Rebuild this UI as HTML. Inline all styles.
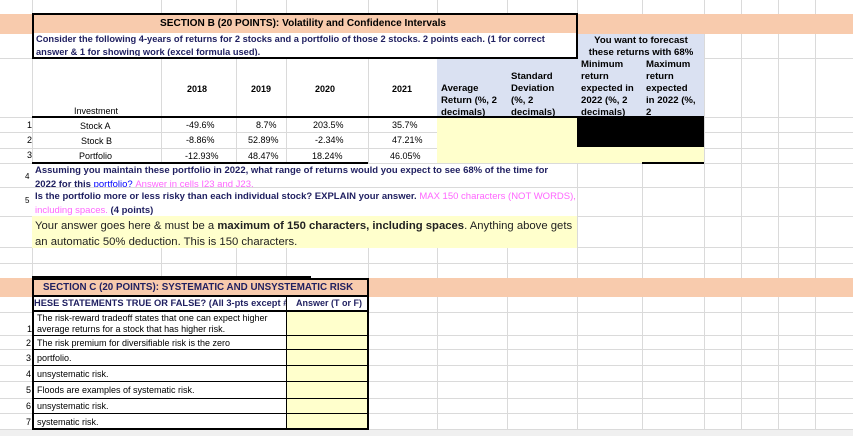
<!DOCTYPE html>
<html><head><meta charset="utf-8"><style>
body{margin:0;width:853px;height:436px;overflow:hidden;background:#fff;font-family:"Liberation Sans",sans-serif;position:relative}
.a{position:absolute;box-sizing:border-box}
.vl{position:absolute;top:0;width:1px;height:436px;background:#dadada}
.hl{position:absolute;left:0;height:1px;width:853px;background:#dadada}
.t{position:absolute;white-space:nowrap;font-size:9px;color:#000}
.b{font-weight:bold}
.bh{font-weight:bold;font-size:9.6px;line-height:12px}
</style></head><body>
<div class="vl" style="left:32px"></div><div class="vl" style="left:161px"></div><div class="vl" style="left:236px"></div><div class="vl" style="left:286px"></div><div class="vl" style="left:368px"></div><div class="vl" style="left:437px"></div><div class="vl" style="left:507px"></div><div class="vl" style="left:577px"></div><div class="vl" style="left:642px"></div><div class="vl" style="left:704px"></div><div class="vl" style="left:741px"></div><div class="vl" style="left:778px"></div><div class="vl" style="left:815px"></div>
<div class="hl" style="top:58px"></div><div class="hl" style="top:117px"></div><div class="hl" style="top:132px"></div><div class="hl" style="top:148px"></div><div class="hl" style="top:163px"></div><div class="hl" style="top:187px"></div><div class="hl" style="top:216px"></div><div class="hl" style="top:247px"></div><div class="hl" style="top:263px"></div>
<div class="hl" style="top:312px"></div><div class="hl" style="top:335px"></div><div class="hl" style="top:349px"></div><div class="hl" style="top:365px"></div><div class="hl" style="top:381px"></div><div class="hl" style="top:398px"></div><div class="hl" style="top:413px"></div><div class="hl" style="top:429px"></div>
<div class="a" style="left:0;top:14px;width:853px;height:20px;background:#f8cbad"></div>
<div class="a" style="left:0;top:278px;width:853px;height:19px;background:#f8cbad"></div>
<div class="a" style="left:32px;top:13px;width:546px;height:22px;border:2px solid #000;background:#f8cbad"></div>
<div class="t b" style="left:160px;top:17px;font-size:10.5px;transform:scaleX(0.96);transform-origin:left">SECTION B (20 POINTS): Volatility and Confidence Intervals</div>
<div class="a" style="left:32px;top:33px;width:546px;height:26px;border:2px solid #000;border-top:0;background:#fff;overflow:hidden"></div>
<div class="t b" style="left:36px;top:34px;font-size:9.3px;color:#1f1f60">Consider the following 4-years of returns for 2 stocks and a portfolio of those 2 stocks. 2 points each. (1 for correct</div>
<div class="t b" style="left:36px;top:47px;font-size:9.3px;color:#1f1f60;height:9px;overflow:hidden">answer &amp; 1 for showing work (excel formula used).</div>
<div class="a" style="left:578px;top:34px;width:126px;height:83px;background:#dae1f2"></div>
<div class="a" style="left:437px;top:59px;width:141px;height:58px;background:#dae1f2"></div>
<div class="t bh" style="left:580px;top:35px;text-align:center;width:122px">You want to forecast<br>these returns with 68%</div>
<div class="t bh" style="left:581px;top:59px">Minimum<br>return<br>expected in<br>2022 (%, 2<br>decimals)</div>
<div class="t bh" style="left:646px;top:59px">Maximum<br>return<br>expected<br>in 2022 (%,<br>2</div>
<div class="t bh" style="left:441px;top:83px">Average<br>Return (%, 2<br>decimals)</div>
<div class="t bh" style="left:511px;top:71px">Standard<br>Deviation<br>(%, 2<br>decimals)</div>
<div class="t b" style="left:187px;top:84px;font-size:9px">2018</div><div class="t b" style="left:251px;top:84px;font-size:9px">2019</div><div class="t b" style="left:315px;top:84px;font-size:9px">2020</div><div class="t b" style="left:392px;top:84px;font-size:9px">2021</div>
<div class="t" style="left:74px;top:106px">Investment</div>
<div class="a" style="left:32px;top:116px;width:672px;height:2px;background:#000"></div>
<div class="a" style="left:437px;top:118px;width:140px;height:45px;background:#ffffcc"></div>
<div class="a" style="left:577px;top:118px;width:127px;height:29px;background:#000"></div>
<div class="a" style="left:577px;top:147px;width:127px;height:16px;background:#ffffcc"></div>
<div class="t" style="left:27px;top:120px">1</div><div class="t" style="left:27px;top:135px">2</div><div class="t" style="left:27px;top:150px">3</div>
<div class="t" style="left:80px;top:121px">Stock A</div><div class="t" style="left:81px;top:136px">Stock B</div><div class="t" style="left:79px;top:151px">Portfolio</div>
<div class="t" style="left:186px;top:120px">-49.6%</div><div class="t" style="left:256px;top:120px">8.7%</div><div class="t" style="left:313px;top:120px">203.5%</div><div class="t" style="left:392px;top:120px">35.7%</div>
<div class="t" style="left:186px;top:135px">-8.86%</div><div class="t" style="left:248px;top:135px">52.89%</div><div class="t" style="left:315px;top:135px">-2.34%</div><div class="t" style="left:392px;top:135px">47.21%</div>
<div class="t" style="left:185px;top:151px">-12.93%</div><div class="t" style="left:248px;top:151px">48.47%</div><div class="t" style="left:312px;top:151px">18.24%</div><div class="t" style="left:390px;top:151px">46.05%</div>
<div class="a" style="left:32px;top:162px;width:336px;height:2px;background:#000"></div>
<div class="a" style="left:642px;top:162px;width:62px;height:2px;background:#000"></div>
<div class="a" style="left:32px;top:164px;width:545px;height:23px;background:#fff;overflow:hidden">
<div class="t b" style="left:3px;top:1px;font-size:9.5px;color:#1f1f60">Assuming you maintain these portfolio in 2022, what range of returns would you expect to see 68% of the time for</div>
<div class="t b" style="left:3px;top:15px;font-size:9.5px;color:#1f1f60">2022 for this <span style="color:#00f;font-weight:normal">portfolio?</span> <span style="color:#ff66ff;font-weight:normal">Answer in cells I23 and J23.</span></div></div>
<div class="t" style="left:25px;top:172px;font-size:8px">4</div>
<div class="t" style="left:25px;top:196px;font-size:8px">5</div>
<div class="a" style="left:32px;top:188px;width:545px;height:28px;background:#fff"></div>
<div class="t b" style="left:35px;top:191px;font-size:9.5px;color:#1f1f60">Is the portfolio more or less risky than each individual stock? EXPLAIN your answer. <span style="color:#ff66ff;font-weight:normal">MAX 150 characters (NOT WORDS),</span></div>
<div class="t b" style="left:35px;top:205px;font-size:9.5px;color:#1f1f60"><span style="color:#ff66ff;font-weight:normal">including spaces.</span> (4 points)</div>
<div class="a" style="left:32px;top:216px;width:545px;height:32px;background:#ffffcc"></div>
<div class="t" style="left:35px;top:218px;font-size:11.3px;line-height:16px;color:#222">Your answer goes here &amp; must be a <b>maximum of 150 characters, including spaces</b>. Anything above gets<br>an automatic 50% deduction. This is 150 characters.</div>
<div class="a" style="left:32px;top:276px;width:279px;height:3px;background:#000"></div>
<div class="a" style="left:32px;top:278px;width:337px;height:152px;border:2px solid #000;background:#fff"></div>
<div class="a" style="left:34px;top:280px;width:333px;height:17px;background:#f8cbad;border-bottom:2px solid #000"></div>
<div class="t b" style="left:43px;top:282px;font-size:10px;color:#1f1f60;transform:scaleX(0.98);transform-origin:left">SECTION C (20 POINTS): SYSTEMATIC AND UNSYSTEMATIC RISK</div>
<div class="a" style="left:34px;top:297px;width:333px;height:15px;border-bottom:2px solid #000;overflow:hidden">
<div class="a" style="left:0;top:0;width:252px;height:13px;overflow:hidden"><div class="t b" style="left:0;top:1px;font-size:9.3px;color:#1f1f60">HESE STATEMENTS TRUE OR FALSE? (All 3-pts except #1,</div></div>
<div class="t b" style="left:262px;top:1px;font-size:9px;color:#1f1f60">Answer (T or F)</div></div>
<div class="a" style="left:286px;top:297px;width:1px;height:132px;background:#000"></div>
<div class="a" style="left:287px;top:312px;width:80px;height:116px;background:#ffffcc"></div>
<div class="a" style="left:34px;top:335px;width:333px;height:1px;background:#000"></div>
<div class="a" style="left:34px;top:349px;width:333px;height:1px;background:#000"></div>
<div class="a" style="left:34px;top:365px;width:333px;height:1px;background:#000"></div>
<div class="a" style="left:34px;top:381px;width:333px;height:1px;background:#000"></div>
<div class="a" style="left:34px;top:398px;width:333px;height:1px;background:#000"></div>
<div class="a" style="left:34px;top:413px;width:333px;height:1px;background:#000"></div>
<div class="t" style="left:37px;top:313px">The risk-reward tradeoff states that one can expect higher</div>
<div class="t" style="left:37px;top:324px">average returns for a stock that has higher risk.</div>
<div class="t" style="left:37px;top:338px">The risk premium for diversifiable risk is the zero</div>
<div class="t" style="left:37px;top:353px">portfolio.</div>
<div class="t" style="left:37px;top:369px">unsystematic risk.</div>
<div class="t" style="left:37px;top:385px">Floods are examples of systematic risk.</div>
<div class="t" style="left:37px;top:401px">unsystematic risk.</div>
<div class="t" style="left:37px;top:417px">systematic risk.</div>
<div class="t" style="left:27px;top:324px">1</div><div class="t" style="left:26px;top:338px">2</div><div class="t" style="left:26px;top:353px">3</div><div class="t" style="left:26px;top:369px">4</div><div class="t" style="left:26px;top:385px">5</div><div class="t" style="left:26px;top:401px">6</div><div class="t" style="left:26px;top:417px">7</div>
<div class="a" style="left:0;top:430px;width:853px;height:6px;background:#f0f0f0"></div>
</body></html>
